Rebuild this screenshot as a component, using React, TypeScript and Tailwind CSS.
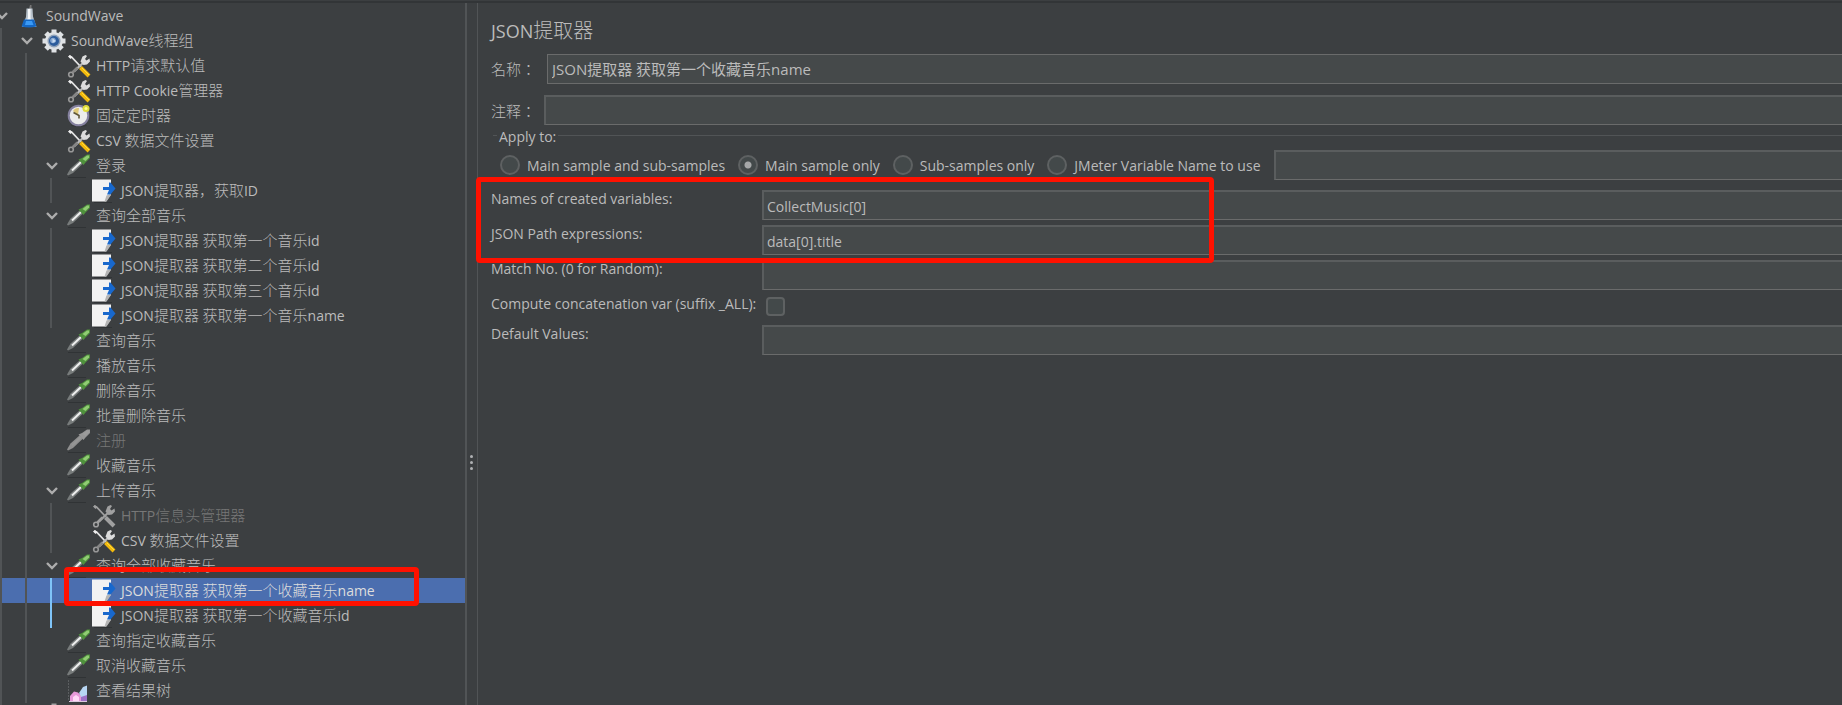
import type { ReactNode } from "react";

type IconName = "flask" | "gear" | "tools" | "timer" | "dropper" | "page" | "chart";

type TreeItem = {
  label: string;
  icon: IconName;
  depth: number;
  open?: boolean;
  disabled?: boolean;
  selected?: boolean;
  activeGuide?: boolean;
};

const items: TreeItem[] = [
  { label: "SoundWave", icon: "flask", depth: 0, open: true },
  { label: "SoundWave线程组", icon: "gear", depth: 1, open: true },
  { label: "HTTP请求默认值", icon: "tools", depth: 2 },
  { label: "HTTP Cookie管理器", icon: "tools", depth: 2 },
  { label: "固定定时器", icon: "timer", depth: 2 },
  { label: "CSV 数据文件设置", icon: "tools", depth: 2 },
  { label: "登录", icon: "dropper", depth: 2, open: true },
  { label: "JSON提取器，获取ID", icon: "page", depth: 3 },
  { label: "查询全部音乐", icon: "dropper", depth: 2, open: true },
  { label: "JSON提取器 获取第一个音乐id", icon: "page", depth: 3 },
  { label: "JSON提取器 获取第二个音乐id", icon: "page", depth: 3 },
  { label: "JSON提取器 获取第三个音乐id", icon: "page", depth: 3 },
  { label: "JSON提取器 获取第一个音乐name", icon: "page", depth: 3 },
  { label: "查询音乐", icon: "dropper", depth: 2 },
  { label: "播放音乐", icon: "dropper", depth: 2 },
  { label: "删除音乐", icon: "dropper", depth: 2 },
  { label: "批量删除音乐", icon: "dropper", depth: 2 },
  { label: "注册", icon: "dropper", depth: 2, disabled: true },
  { label: "收藏音乐", icon: "dropper", depth: 2 },
  { label: "上传音乐", icon: "dropper", depth: 2, open: true },
  { label: "HTTP信息头管理器", icon: "tools", depth: 3, disabled: true },
  { label: "CSV 数据文件设置", icon: "tools", depth: 3 },
  { label: "查询全部收藏音乐", icon: "dropper", depth: 2, open: true },
  { label: "JSON提取器 获取第一个收藏音乐name", icon: "page", depth: 3, selected: true, activeGuide: true },
  { label: "JSON提取器 获取第一个收藏音乐id", icon: "page", depth: 3, activeGuide: true },
  { label: "查询指定收藏音乐", icon: "dropper", depth: 2 },
  { label: "取消收藏音乐", icon: "dropper", depth: 2 },
  { label: "查看结果树", icon: "chart", depth: 2 },
];

const scopes = [
  "Main sample and sub-samples",
  "Main sample only",
  "Sub-samples only",
  "JMeter Variable Name to use",
];

const fieldClass =
  "h-[30px] min-w-0 flex-1 border-t-2 border-b border-l-2 border-[#5a5d5e] border-b-[#6a6b6b] bg-[#45494a] px-[3px] pt-0.5 text-[#bbbbbb] outline-none";

const App = () => {
  return (
    <div className="relative flex min-h-screen flex-col overflow-hidden bg-[#3c3f41] font-['Open_Sans','Noto_Sans_CJK_SC',sans-serif] text-sm text-[#bbbbbb]">
      <div className="mt-px h-0.5 bg-[#323537]" />

      <div className="flex flex-1">
        {/* Test plan tree */}
        <aside className="w-[467px] shrink-0 overflow-hidden border-r-2 border-[#515456]">
          <ul>
            {items.map((item, i) => (
              <TreeRow key={i} item={item} />
            ))}
            {/* Next row, cut off by the bottom edge */}
            <li className="h-0.5 overflow-hidden border-l-2 border-[#515456] pl-10">
              <TreeIcon name="gear" disabled />
            </li>
          </ul>
        </aside>

        {/* Splitter */}
        <div className="flex w-[11px] shrink-0 flex-col items-center justify-center gap-[3px] border-r border-[#515456] pt-[216px] pr-0.5">
          <span className="size-[3px] rounded-full bg-[#afb1b3]" />
          <span className="size-[3px] rounded-full bg-[#afb1b3]" />
          <span className="size-[3px] rounded-full bg-[#afb1b3]" />
        </div>

        {/* Extractor form */}
        <main className="min-w-0 flex-1 pl-[13px]">
          <h1 className="flex h-[51px] items-center pt-1 text-lg">
            <Mixed text="JSON提取器" cjkClass="text-xl font-light" />
          </h1>

          <div className="flex items-center">
            <label htmlFor="name" className="w-14 font-['Noto_Sans_CJK_TC',sans-serif] text-[15px] font-light">
              名称：
            </label>
            <input
              id="name"
              className="h-[30px] min-w-0 flex-1 border border-r-0 border-[#6a6b6b] bg-[#45494a] px-1 pb-0.5 text-[15px] text-[#bbbbbb] outline-none"
              defaultValue="JSON提取器 获取第一个收藏音乐name"
            />
          </div>

          <div className="mt-[11px] flex items-center">
            <label htmlFor="comment" className="w-[53px] pt-0.5 font-['Noto_Sans_CJK_TC',sans-serif] text-[15px] font-light">
              注释：
            </label>
            <input id="comment" className={fieldClass} />
          </div>

          <fieldset className="mt-0.5 ml-0.5 border-t border-[#515456]">
            <legend className="ml-1 px-0.5 pt-1 leading-3">Apply to:</legend>
            <div className="flex items-center pt-[7px] pl-[7px]">
              {scopes.map((scope) => (
                <label key={scope} className="mr-[13px] flex items-center gap-[7px] whitespace-nowrap">
                  <input
                    type="radio"
                    name="scope"
                    defaultChecked={scope === "Main sample only"}
                    className="size-5 appearance-none rounded-full border-2 border-[#5e6162] bg-[#43494a] checked:bg-[radial-gradient(circle,#a5a7a8_3px,#43494a_4px)]"
                  />
                  <span className="pt-0.5">{scope}</span>
                </label>
              ))}
              <input aria-label="JMeter Variable Name" className={fieldClass} />
            </div>
          </fieldset>

          <div className="mt-2.5">
            <FormRow id="variables" label="Names of created variables:">
              <input id="variables" className={fieldClass} defaultValue="CollectMusic[0]" />
            </FormRow>
            <FormRow id="path" label="JSON Path expressions:">
              <input id="path" className={fieldClass} defaultValue="data[0].title" />
            </FormRow>
            <FormRow id="match" label="Match No. (0 for Random):">
              <input id="match" className={fieldClass} />
            </FormRow>
            <div className="flex h-[30px] items-start">
              <label htmlFor="concat" className="w-[275px] whitespace-nowrap leading-[18px]">
                Compute concatenation var (suffix _ALL):
              </label>
              <input
                id="concat"
                type="checkbox"
                className="mt-0.5 size-[19px] appearance-none rounded-sm border-2 border-[#5e6162] bg-[#43494a]"
              />
            </div>
            <FormRow id="default" label="Default Values:">
              <input id="default" className={fieldClass} />
            </FormRow>
          </div>
        </main>
      </div>

      {/* Highlight frames */}
      <div className="pointer-events-none absolute top-[177px] left-[476px] h-[86px] w-[738px] rounded-sm border-5 border-[#ff1100]" />
      <div className="pointer-events-none absolute top-[567px] left-[64px] h-[39px] w-[355px] rounded-sm border-5 border-[#ff1100]" />
    </div>
  );
};

export default App;

const FormRow = ({ id, label, children }: { id: string; label: string; children: ReactNode }) => (
  <div className="flex h-[35px] items-start">
    <label htmlFor={id} className="w-[271px] leading-[18px]">
      {label}
    </label>
    {children}
  </div>
);

// Chinese runs are set one size larger than the Latin ones
const Mixed = ({ text, cjkClass = "text-[15px] font-light" }: { text: string; cjkClass?: string }) => (
  <span className="whitespace-pre">
    {text.split(/([\u3000-\u9fff\uff00-\uffef]+)/).map((part, i) =>
      i % 2 ? (
        <span key={i} className={cjkClass}>
          {part}
        </span>
      ) : (
        part
      )
    )}
  </span>
);

const TreeRow = ({ item }: { item: TreeItem }) => (
  <li
    className={`flex h-[25px] items-center ${
      item.selected ? "bg-[#4b6eaf] text-[#dddddd]" : item.disabled ? "text-[#777777]" : ""
    }`}
  >
    {Array.from({ length: item.depth }, (_, level) => (
      <span
        key={level}
        className={`h-full w-[25px] shrink-0 border-l-2 ${
          level === 2 && item.activeGuide ? "border-[#7fc4f8]" : "border-[#515456]"
        }`}
      />
    ))}
    <span className="w-[17px] shrink-0">
      {item.open && (
        <button aria-label="Collapse" className="-ml-1 block">
          <svg width="12" height="8" viewBox="0 0 12 8" fill="none" stroke="#adadad" strokeWidth="2.4">
            <path d="M1 1l5 5 5-5" />
          </svg>
        </button>
      )}
    </span>
    <span className="mr-[5px] shrink-0">
      <TreeIcon name={item.icon} disabled={item.disabled} />
    </span>
    <span className="pt-px">
      <Mixed text={item.label} />
    </span>
  </li>
);

const TreeIcon = ({ name, disabled }: { name: IconName; disabled?: boolean }) => (
  <svg width="24" height="24" viewBox="0 0 24 24" fill="none">
    {name === "flask" && (
      <>
        <path d="M13 1h1.500v4H12z" fill="#777" />
        <path d="M9.500 4.500h6l.5 8 3.500 10.500H5L9 13z" fill="#b9c3cc" />
        <path d="M11 5h2.500v9l1 3h-4.500l1-4z" fill="#f5f7f9" />
        <path d="M7 15.500h10l2.500 7q-7.500 2-15 0z" fill="#1467c4" />
        <path d="M9 17h6l1.500 4H8z" fill="#3b9af5" />
      </>
    )}
    {name === "gear" && (
      <>
        <g stroke={disabled ? "#a0a0a0" : "#dfe2e5"} strokeWidth="5">
          <path d="M12 .5v23M.5 12h23M4 4l16 16M20 4L4 20" />
        </g>
        <circle cx="12" cy="12" r="9" fill="#dfe2e5" />
        <circle cx="12" cy="12" r="6.500" fill="#8ea0b8" />
        <circle cx="12" cy="12" r="5" fill="#2c5c9c" />
        <circle cx="11" cy="11.500" r="2.800" fill="#86a6cf" />
        <path d="M10.500 9.500l3.500 2.500-3.500 2z" fill="#c9dcf2" />
      </>
    )}
    {name === "tools" && (
      <>
        <path d="M2 2l3 1.500 9 9.500" stroke={disabled ? "#a0a0a0" : "#e4e4e4"} strokeWidth="1.800" />
        <path d="M1 2.500L3 1l2.500 2L3.500 5z" fill={disabled ? "#a0a0a0" : "#eeeeee"} />
        <path d="M13.500 13.500l8.500 8.500" stroke={disabled ? "#a0a0a0" : "#f2b90c"} strokeWidth="4" />
        <path d="M15 14l7 7" stroke={disabled ? "#a0a0a0" : "#ffdc3c"} />
        <path d="M17 8L7 17.500" stroke={disabled ? "#a0a0a0" : "#bdbdbd"} strokeWidth="2.200" />
        <path d="M13.500 7.500l2-5 3-1.500 1.500 1-2 3 1.500 1.500 3-2 .5 3-3 3-3.500.5z" fill={disabled ? "#a0a0a0" : "#dcdcdc"} />
        <circle cx="4" cy="20.500" r="2.300" stroke={disabled ? "#a0a0a0" : "#989898"} strokeWidth="1.600" />
        <path d="M5.500 18.500l5-5" stroke={disabled ? "#a0a0a0" : "#858585"} strokeWidth="2.600" />
      </>
    )}
    {name === "timer" && (
      <>
        <ellipse cx="12" cy="21.500" rx="8" ry="1.500" fill="#333638" />
        <circle cx="11.500" cy="11.500" r="9.800" fill="#ececec" stroke="#85819f" strokeWidth="2" />
        <path d="M11 11L6 7q2-3.500 6-3z" fill="#dfc978" />
        <path d="M6.500 8.500L12 11.500v3" stroke="#5f5638" strokeWidth="1.600" />
        <circle cx="19" cy="4.500" r="3.500" fill="#e0db3c" />
        <circle cx="19" cy="4.500" r="1.500" fill="#fffd90" />
      </>
    )}
    {name === "dropper" && (
      <>
        <path d="M1 23.500h18" stroke="#303335" />
        <path d="M0 20.500l3.500-6 9-8 3.500 3-10 9.500L1 21.500z" fill={disabled ? "#8f8f8f" : "#777b7b"} />
        <path d="M5 16.500l9-8.500" stroke={disabled ? "#969696" : "#eeeeee"} strokeWidth="2" />
        <path d="M11.500 5.500l3.500-1.500L20 .5h3v3.500l-4.500 4.500-2 2.500z" fill={disabled ? "#969696" : "#4f913c"} />
        <path d="M15.500 5L20 1.500h2v2l-3.500 3.500z" fill={disabled ? "#9c9c9c" : "#91cc74"} />
      </>
    )}
    {name === "page" && (
      <>
        <path d="M2 23.500h18" stroke="#303335" />
        <path d="M0 .5h19v15l-5 7H0z" fill="#f2f2f2" />
        <path d="M12.500 22.500l2-6 4.500-1.500v1l-4.500 6.500z" fill="#b4b4b4" />
        <path d="M11 8h6V3.500h1.500l5 6-5 6H15l2-4.500h-6z" fill="#1868cd" />
      </>
    )}
    {name === "chart" && (
      <>
        <path d="M1.500 1v21" stroke="#5b5e60" strokeDasharray="2 1" />
        <path d="M3 22v-5l4-4.500 4 1 4 4 4 4.500z" fill="#e79ad9" />
        <path d="M6 22v-4l3-2 3 2v4z" fill="#ffd8f6" />
        <path d="M12 14l4-6 4-1.500v12l-5 1z" fill="#b7d5f3" />
        <path d="M14 22v-4l6-2v6z" fill="#9d6fc6" />
        <path d="M2 22.500h18" stroke="#dcc8df" />
      </>
    )}
  </svg>
);
